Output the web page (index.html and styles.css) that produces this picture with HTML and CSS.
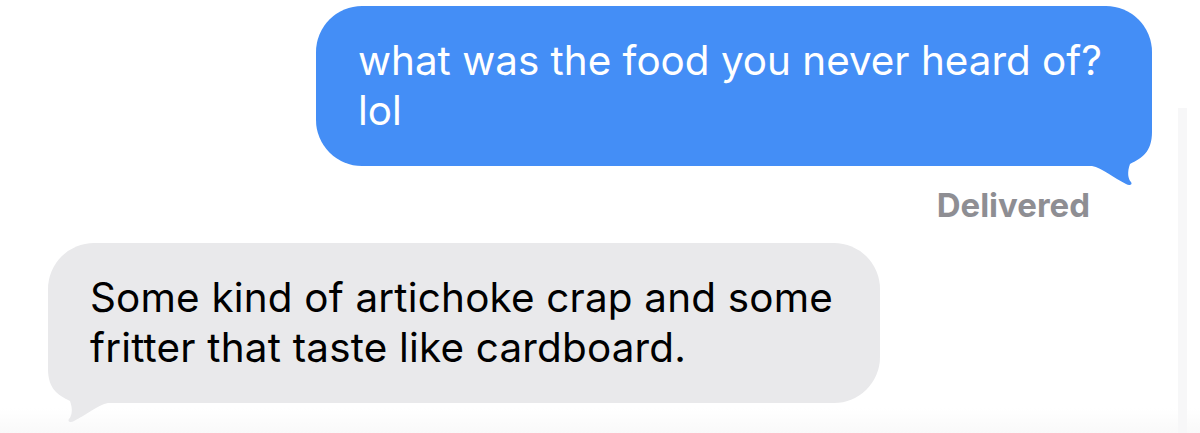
FILE: index.html
```html
<!DOCTYPE html>
<html lang="en">
<head>
    <meta charset="UTF-8">
    <meta name="viewport" content="width=device-width, initial-scale=1.0">
    <title>Messages</title>
    <link rel="stylesheet" href="styles.css">
</head>
<body>
    <main class="thread">
        <div class="row row-out">
            <div class="bubble bubble-out">
                <p>what was the food you never heard of?<br>lol</p>
                <svg class="tail tail-out" width="60" height="68" viewBox="0 0 60 68">
                    <path d="M60 0 V14 C60 34 50 40 38 46 C35 54 36 61 39 64 C41 67 37 68 34 66 C22 60 10 50 0 48 V0 Z" fill="#448ef6"/>
                </svg>
            </div>
        </div>
        <div class="status">Delivered</div>
        <div class="row row-in">
            <div class="bubble bubble-in">
                <p>Some kind of artichoke crap and some<br>fritter that taste like cardboard.</p>
                <svg class="tail tail-in" width="60" height="68" viewBox="0 0 60 68">
                    <path d="M0 0 V14 C0 34 10 40 22 46 C25 54 24 61 21 64 C19 67 23 68 26 66 C38 60 50 50 60 48 V0 Z" fill="#e9e9eb"/>
                </svg>
            </div>
        </div>
    </main>
</body>
</html>
```

FILE: styles.css
```css
body {
    margin: 0;
    background-color: #fff;
    background-image:
        linear-gradient(to right, #f7f7f8, #f7f7f8),
        linear-gradient(to bottom, #fff, #f9f9f9);
    background-repeat: no-repeat;
    background-size: 9px 325px, 100% 25px;
    background-position: 1178px 108px, 0 408px;
    font-family: Inter, "Noto Sans", sans-serif;
    height: 433px;
    overflow: hidden;
}

.thread {
    display: flex;
    flex-direction: column;
    padding: 6px 48px 0 48px;
}

.row {
    display: flex;
}

.row-out {
    justify-content: flex-end;
}

.row-in {
    justify-content: flex-start;
}

.bubble {
    position: relative;
    border-radius: 46px;
    padding: 30px 42px;
    box-sizing: border-box;
    height: 160px;
}

.bubble p {
    margin: 0;
    font-size: 40.4px;
    line-height: 50px;
    position: relative;
    z-index: 1;
}

.bubble-out {
    width: 836px;
    background: #448ef6;
    color: #fff;
}

.bubble-in {
    width: 832px;
    background: #e9e9eb;
    color: #000;
}

.bubble-in p {
    letter-spacing: 0.2px;
}

.tail {
    position: absolute;
    bottom: -20px;
}

.tail-out {
    right: 0;
}

.tail-in {
    left: 0;
}

.status {
    align-self: flex-end;
    margin: 22px 62px 0 0;
    height: 55px;
    color: #8e8e93;
    font-size: 33px;
    font-weight: 700;
    line-height: 34px;
}
```
